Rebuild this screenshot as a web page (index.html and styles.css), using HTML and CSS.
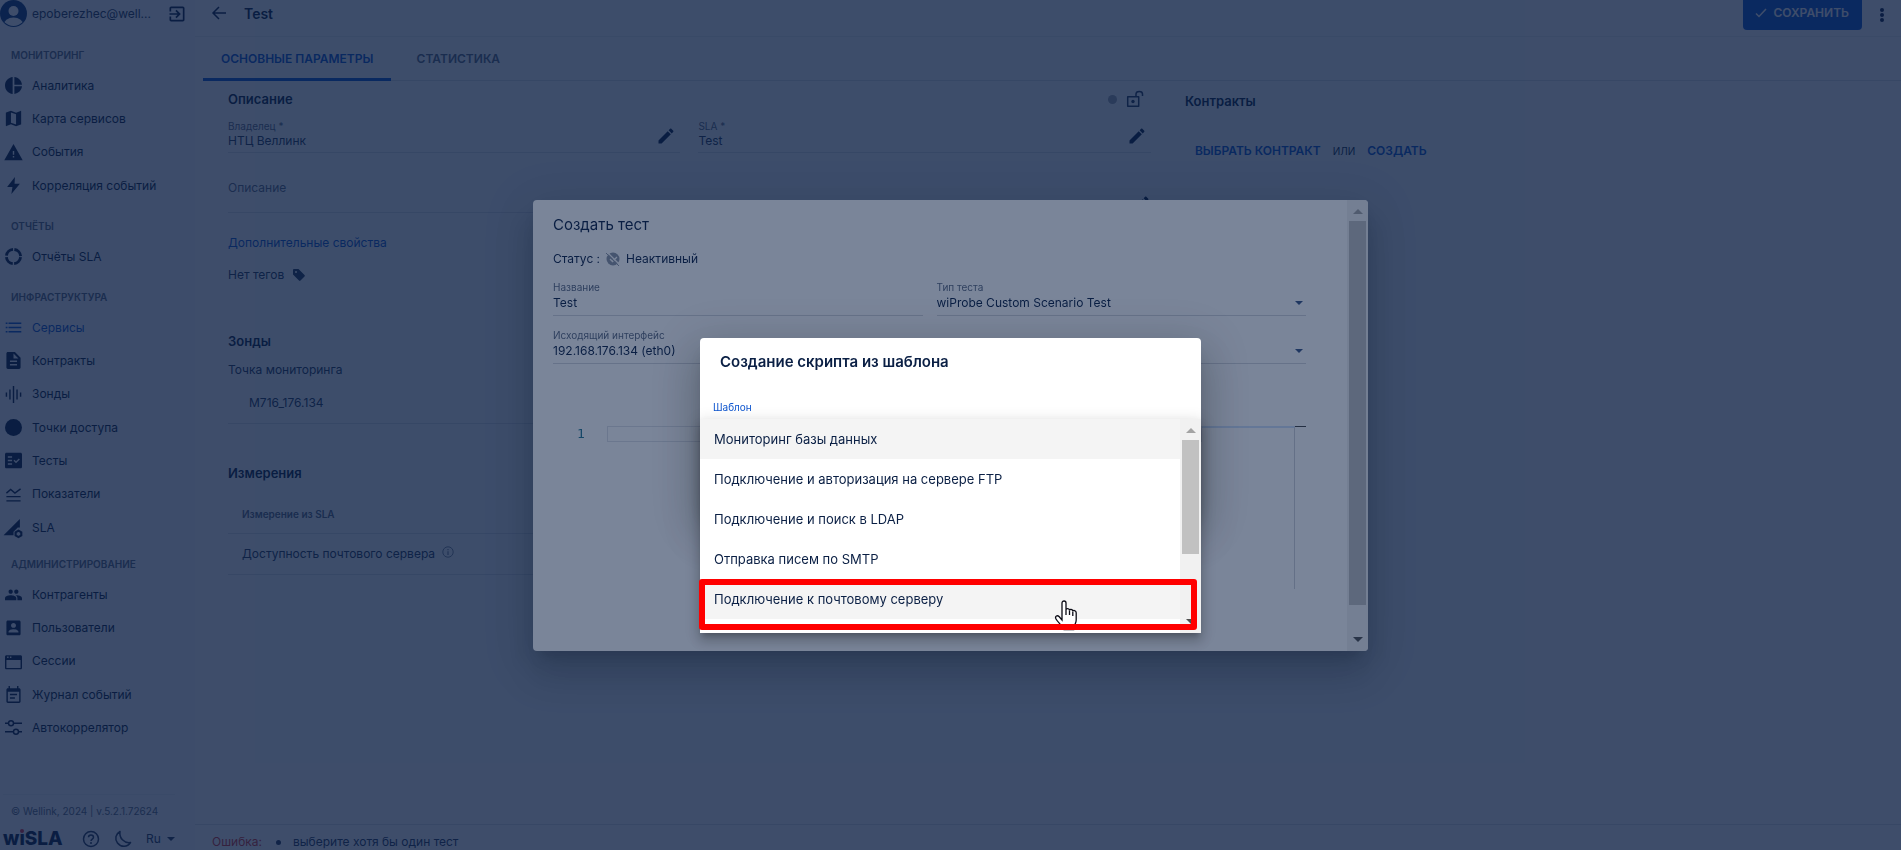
FILE: index.html
```html
<!DOCTYPE html>
<html lang="ru">
<head>
<meta charset="utf-8">
<title>wiSLA — Test</title>
<link rel="stylesheet" href="styles.css">
</head>
<body>
<svg class="defs" width="0" height="0" aria-hidden="true">
  <symbol id="i-edit" viewBox="0 0 24 24"><path d="M3 17.25V21h3.75L17.81 9.94l-3.75-3.75L3 17.25zM20.71 7.04c.39-.39.39-1.02 0-1.41l-2.34-2.34c-.39-.39-1.02-.39-1.41 0l-1.83 1.83 3.75 3.75 1.83-1.83z"/></symbol>
  <symbol id="i-caret" viewBox="0 0 8 4"><path d="M0 0h8L4 4z"/></symbol>
</svg>
<div class="app">
  <aside class="sidebar">
    <div class="user">
      <svg class="avatar" viewBox="0 0 27 27"><defs><clipPath id="av"><circle cx="13.500" cy="13.500" r="12.500"/></clipPath></defs><circle class="avatar-bg" cx="13.500" cy="13.500" r="13.500"/><g clip-path="url(#av)" fill="#fff"><circle cx="13.500" cy="11" r="5"/><ellipse cx="13.500" cy="25" rx="10" ry="7.500"/></g></svg>
      <span class="user-name">epoberezhec@well...</span>
      <button class="icon-btn" aria-label="Выйти"><svg viewBox="0 0 24 24" width="20" height="20"><path d="M10.090 15.590L11.500 17l5-5-5-5-1.410 1.410L12.670 11H3v2h9.670l-2.580 2.590zM19 3H5c-1.110 0-2 .9-2 2v4h2V5h14v14H5v-4H3v4c0 1.100.89 2 2 2h14c1.100 0 2-.9 2-2V5c0-1.100-.9-2-2-2z"/></svg></button>
    </div>
    <nav>
      <section class="group">
        <h2>МОНИТОРИНГ</h2>
        <a href="#"><svg viewBox="2 2 20 20"><path d="M11 2v20c-5.070-.5-9-4.790-9-10s3.930-9.500 9-10zm2.030 0v8.990H22c-.47-4.740-4.240-8.520-8.970-8.990zm0 11.010V22c4.740-.47 8.500-4.250 8.970-8.990h-8.970z"/></svg>Аналитика</a>
        <a href="#"><svg viewBox="2 2 20 20"><path d="M20.500 3l-.16.030L15 5.100 9 3 3.360 4.900c-.21.070-.36.250-.36.480V20.500c0 .28.220.5.5.5l.16-.03L9 18.900l6 2.100 5.640-1.900c.21-.07.36-.25.36-.48V3.500c0-.28-.22-.5-.5-.5zM15 19l-6-2.110V5l6 2.110V19z"/></svg>Карта сервисов</a>
        <a href="#"><svg viewBox="0 0 24 24"><path d="M-1 23h26L12 0zM13 19h-2v-2h2v2zm0-4h-2v-5h2v5z" fill-rule="evenodd"/></svg>События</a>
        <a href="#"><svg viewBox="0 0 24 24"><path d="M14 0L3 14h7.500L9 24l12-14.500h-7.500z"/></svg>Корреляция событий</a>
      </section>
      <section class="group">
        <h2>ОТЧЁТЫ</h2>
        <a href="#"><svg class="stroke" viewBox="0 0 24 24"><circle cx="12" cy="12" r="10" stroke-width="4" stroke-dasharray="13.700 2" stroke-dashoffset="-1"/></svg>Отчёты SLA</a>
      </section>
      <section class="group">
        <h2>ИНФРАСТРУКТУРА</h2>
        <a href="#" class="active" aria-current="page"><svg viewBox="0 0 24 24"><path d="M1 5h2.500v2H1zm4 0h18v2H5zM1 11h2.500v2H1zm4 0h18v2H5zM1 17h2.500v2H1zm4 0h18v2H5z"/></svg>Сервисы</a>
        <a href="#"><svg viewBox="0 0 24 24"><path fill-rule="evenodd" d="M14 0H4C3 0 2 1 2 2v20c0 1 1 2 2 2h16c1 0 2-1 2-2V8zm3 19H7v-2h10zm0-5H7v-2h10zm-5-5V2l7 7h-7z"/></svg>Контракты</a>
        <a href="#"><svg viewBox="0 0 24 24"><path d="M6 19h2V5H6zm5 5h2V0h-2zm-10-9h2V9H1zm15 4h2V5h-2zm5-10v6h2V9z"/></svg>Зонды</a>
        <a href="#"><svg viewBox="0 0 24 24"><circle cx="12" cy="12" r="12"/></svg>Точки доступа</a>
        <a href="#"><svg viewBox="0 0 24 24"><path fill-rule="evenodd" d="M22 1H2C1 1 0 2 0 3v18c0 1 1 2 2 2h20c1 0 2-1 2-2V3c0-1-1-2-2-2zM10 18H4v-2h6zm0-5H4v-2h6zm0-5H4V6h6zm5.500 8L12 12.500l1.500-1.500 2 2 4-4L21 10.500z"/></svg>Тесты</a>
        <a href="#"><svg class="stroke" viewBox="0 0 24 24" stroke-width="2"><path d="M2 21h20M2 15h20M2 10l6-5 6 5 8-6"/></svg>Показатели</a>
        <a href="#"><svg viewBox="0 0 24 24"><path d="M-2 23L21 0v12h-3l-6 6v5z"/><path fill="none" stroke="currentColor" stroke-width="3" d="M19 16.500l4 2.300v4.400l-4 2.300-4-2.300v-4.400z"/></svg>SLA</a>
      </section>
      <section class="group group-last">
        <h2>АДМИНИСТРИРОВАНИЕ</h2>
        <a href="#"><svg viewBox="0 0 24 24"><path d="M16 11c1.660 0 3-1.340 3-3s-1.340-3-3-3-3 1.340-3 3 1.340 3 3 3zm-8 0c1.660 0 3-1.340 3-3S9.660 5 8 5 5 6.340 5 8s1.340 3 3 3zm0 2c-3 0-8 1.170-8 4v3h16v-3c0-2.830-5-4-8-4zm8 0h-1c1.500 1 2.500 2.500 2.500 4v3H24v-3c0-2.830-5-4-8-4z"/></svg>Контрагенты</a>
        <a href="#"><svg viewBox="0 0 24 24"><path fill-rule="evenodd" d="M2 4v17c0 1 1 2 2 2h16c1 0 2-1 2-2V4c0-1-1-2-2-2H4C3 2 2 3 2 4zm13.500 5c0 2-1.500 3.500-3.500 3.500S8.500 11 8.500 9 10 5.500 12 5.500s3.500 1.500 3.500 3.500zM5 18c0-2.500 4.500-3.600 7-3.600s7 1.100 7 3.600v1H5z"/></svg>Пользователи</a>
        <a href="#"><svg viewBox="0 0 24 24"><path fill-rule="evenodd" d="M2 3h20c1 0 2 1 2 2v16c0 1-1 2-2 2H2c-1 0-2-1-2-2V5c0-1 1-2 2-2zm0 7v11h20V10zM3 5v2h2V5zm4 0v2h2V5z"/></svg>Сессии</a>
        <a href="#"><svg viewBox="0 0 24 24"><path d="M17 11H7v2h10v-2zm3-8h-1V0h-2v3H7V0H5v3H4C3 3 2 4 2 5v17c0 1 1 2 2 2h16c1 0 2-1 2-2V5c0-1-1-2-2-2zm0 19H4V8h16v14zm-6-6H7v2h7v-2z"/></svg>Журнал событий</a>
        <a href="#"><svg class="stroke" viewBox="0 0 24 24" stroke-width="2"><path d="M0 6h5M12 6h12M0 18h12M19 18h5"/><circle cx="8.500" cy="6" r="3.500"/><circle cx="15.500" cy="18" r="3.500"/></svg>Автокоррелятор</a>
      </section>
    </nav>
    <footer class="side-foot">
      <p class="copy">© Wellink, 2024 | v.5.2.1.72624</p>
      <div class="tools">
        <span class="logo">w<span class="logo-i">ı</span>SLA</span>
        <button class="icon-btn" aria-label="Помощь"><svg viewBox="0 0 18 18" width="18" height="18"><circle cx="9" cy="9" r="7.500" fill="none" stroke="currentColor" stroke-width="1.500"/><path d="M6.500 7.300c0-3.200 5-3.200 5 0 0 1.700-2.500 1.900-2.500 3.700" fill="none" stroke="currentColor" stroke-width="1.500"/><circle cx="9" cy="13" r="1"/></svg></button>
        <button class="icon-btn" aria-label="Тёмная тема"><svg viewBox="0 0 18 18" width="18" height="18"><path d="M6 1.500C1.500 4 .5 9 3.500 13c3.500 4.500 10 4.500 13-.5C10 13.500 5 8 6 1.500z" fill="none" stroke="currentColor" stroke-width="1.500" stroke-linejoin="round"/></svg></button>
        <button class="lang">Ru <svg width="8" height="4"><use href="#i-caret"/></svg></button>
      </div>
    </footer>
  </aside>
  <main class="main">
    <header class="top">
      <button class="icon-btn" aria-label="Назад"><svg viewBox="0 0 16 16" width="16" height="16"><path d="M15 8H2M8 2L2 8l6 6" fill="none" stroke="currentColor" stroke-width="1.500"/></svg></button>
      <h1>Test</h1>
      <button class="save"><svg viewBox="0 0 12 10" width="12" height="10"><path d="M1 5.500L4 8.500 11 1" fill="none" stroke="currentColor" stroke-width="1.500"/></svg>СОХРАНИТЬ</button>
      <button class="icon-btn" aria-label="Меню"><svg viewBox="0 0 4 14" width="4" height="14"><circle cx="2" cy="2" r="2"/><circle cx="2" cy="7" r="2"/><circle cx="2" cy="12" r="2"/></svg></button>
    </header>
    <div class="tabs" role="tablist">
      <button class="tab selected" role="tab" aria-selected="true">ОСНОВНЫЕ ПАРАМЕТРЫ</button>
      <button class="tab" role="tab" aria-selected="false">СТАТИСТИКА</button>
    </div>
    <div class="content">
      <div class="left">
        <div class="head-row">
          <h3>Описание</h3>
          <span class="dot"></span>
          <svg class="lock" viewBox="0 0 18 18" width="18" height="18"><path d="M1.700 6.700h11v9.600h-11zM10 6.500V4c0-3.500 6.500-3.500 6.500 0v2" fill="none" stroke="currentColor" stroke-width="1.500" stroke-linejoin="round"/><circle cx="7" cy="11.500" r="1.700"/></svg>
        </div>
        <div class="pair">
          <div class="field"><div class="field-text"><label for="owner">Владелец *</label><input id="owner" value="НТЦ Веллинк"></div><button class="icon-btn pencil" aria-label="Изменить владельца"><svg width="20" height="20"><use href="#i-edit"/></svg></button></div>
          <div class="field"><div class="field-text"><label for="sla">SLA *</label><input id="sla" value="Test"></div><button class="icon-btn pencil" aria-label="Изменить SLA"><svg width="20" height="20"><use href="#i-edit"/></svg></button></div>
        </div>
        <div class="field descr"><input aria-label="Описание" placeholder="Описание"><button class="icon-btn pencil" aria-label="Изменить описание"><svg width="20" height="20"><use href="#i-edit"/></svg></button></div>
        <a class="more" href="#">Дополнительные свойства</a>
        <div class="tags">Нет тегов <svg viewBox="0 0 12 12" width="12" height="12"><path fill-rule="evenodd" d="M1 0h4.500L11.500 6c.5.500.5 1 0 1.500L7.500 11.500c-.5.500-1 .5-1.500 0L0 5.500V1c0-.5.500-1 1-1zm2 2a1 1 0 100 2 1 1 0 000-2z"/></svg></div>
        <h3 class="probes">Зонды</h3>
        <p class="sub">Точка мониторинга</p>
        <p class="probe">M716_176.134</p>
        <h3 class="measures">Измерения</h3>
        <table>
          <thead><tr><th>Измерение из SLA</th></tr></thead>
          <tbody><tr><td>Доступность почтового сервера <svg viewBox="0 0 12 12" width="12" height="12"><circle cx="6" cy="6" r="5.200" fill="none" stroke="currentColor" stroke-width=".8"/><path d="M5.500 5.200h1V9h-1zM5.500 3h1v1.200h-1z"/></svg></td></tr></tbody>
        </table>
      </div>
      <div class="right">
        <h3>Контракты</h3>
        <div class="choose"><button class="link-btn">ВЫБРАТЬ КОНТРАКТ</button><span>ИЛИ</span><button class="link-btn">СОЗДАТЬ</button></div>
      </div>
    </div>
    <footer class="errors"><span class="err">Ошибка:</span><ul><li>выберите хотя бы один тест</li></ul></footer>
  </main>
</div>

<div class="backdrop">
  <div class="modal" role="dialog" aria-labelledby="m-title">
    <div class="modal-body">
      <h2 id="m-title">Создать тест</h2>
      <p class="status">Статус : <svg viewBox="0 0 14 14" width="14" height="14"><circle cx="7" cy="7" r="6.500"/><path d="M4 7l2.500 2.500L11 5M1 0l13 13" fill="none" stroke="#fff" stroke-width="1.300"/><path d="M0 1l13 13" fill="none" stroke="currentColor"/></svg> <span>Неактивный</span></p>
      <div class="form">
        <div class="mfield"><label for="name">Название</label><input id="name" value="Test"></div>
        <div class="mfield"><label for="type">Тип теста</label><select id="type"><option>wiProbe Custom Scenario Test</option></select><svg class="arrow" width="8" height="4"><use href="#i-caret"/></svg></div>
        <div class="mfield wide"><label for="iface">Исходящий интерфейс</label><select id="iface"><option>192.168.176.134 (eth0)</option></select><svg class="arrow" width="8" height="4"><use href="#i-caret"/></svg></div>
      </div>
      <div class="editor">
        <div class="gutter">1</div>
        <div class="code"><div class="line"></div></div>
        <div class="minimap"></div>
        <div class="ruler"></div>
      </div>
    </div>
    <div class="scroll"><i class="up"></i><i class="thumb"></i><i class="down"></i></div>
  </div>
</div>

<div class="backdrop">
  <div class="dialog" role="dialog" aria-labelledby="d-title">
    <h2 id="d-title">Создание скрипта из шаблона</h2>
    <label id="tpl">Шаблон</label>
    <div class="menu">
      <ul role="listbox" aria-labelledby="tpl">
        <li role="option" class="hl">Мониторинг базы данных</li>
        <li role="option">Подключение и авторизация на сервере FTP</li>
        <li role="option">Подключение и поиск в LDAP</li>
        <li role="option">Отправка писем по SMTP</li>
        <li role="option" class="hl">Подключение к почтовому серверу</li>
      </ul>
      <div class="scroll"><i class="up"></i><i class="thumb"></i><i class="down"></i></div>
      <svg class="cursor" viewBox="0 0 24 31" width="24" height="31"><path d="M8 20V3c0-2.700 4-2.700 4 0v7c0-1.800 3.500-1.800 3.500.5 0-1.800 3.300-1.300 3.300.8 0-1.500 3.400-1 3.400 1.500V20c0 3-2 5-2.500 9.500H10c-1-3-6-7-8-10.500-1.500-3 1.500-4 3-2.500z" fill="#fff" stroke="#0a0a14" stroke-width="1.300"/><path d="M12 10v5M15.500 10.500V15M18.800 11.500V16" stroke="#0a0a14" stroke-width="1.300"/></svg>
      <div class="mark"></div>
    </div>
  </div>
</div>
</body>
</html>
```
FILE: styles.css
```css
* { box-sizing: border-box; margin: 0; padding: 0; }
:root { --ink: #0a1f44; --muted: #5c6980; --blue: #0d55cf; --line: #dfe2e8; }
body {
  height: 100vh;
  overflow: hidden;
  font: 12px/16px Inter, "Noto Sans", sans-serif;
  color: var(--ink);
  background: #fff;
}
.defs { position: absolute; }
svg { fill: currentColor; flex: none; }
svg.stroke { fill: none; stroke: currentColor; }
button, input, select { font: inherit; color: inherit; background: none; border: 0; outline: 0; }
a { color: inherit; text-decoration: none; }
ul { list-style: none; }
.icon-btn { display: flex; }

.app { display: flex; height: 100vh; }

/* Sidebar */
.sidebar {
  width: 195px;
  flex: none;
  display: flex;
  flex-direction: column;
  background: #f8f9fc;
}
.user { display: flex; align-items: center; height: 27px; padding-right: 8px; }
.avatar { width: 27px; height: 27px; }
.avatar-bg { fill: #0f3a7a; }
.user-name { flex: 1; padding-left: 5px; color: #26385a; }
nav { padding-top: 14px; }
.group + .group { margin-top: 10px; }
.group + .group-last { margin-top: 6px; }
.group h2 {
  padding-left: 11px;
  font-size: 10px;
  font-weight: 600;
  line-height: 28px;
  color: var(--muted);
}
.group a { display: flex; align-items: center; gap: 10px; height: 33px; padding-left: 5px; }
.group a:nth-of-type(3n) { height: 34px; }
.group a svg { width: 17px; height: 17px; overflow: visible; }
.group a.active { color: var(--blue); }
.side-foot { margin-top: auto; }
.copy {
  margin: 0 20px 0 3px;
  padding: 8px 8px 10px;
  border-top: 1px solid #eceef3;
  font-size: 10px;
  color: var(--muted);
}
.tools { display: flex; align-items: center; height: 21px; padding: 0 0 2px 3px; color: #26385a; }
.logo { width: 79px; font-size: 19px; font-weight: 800; line-height: 18px; color: var(--ink); }
.logo-i { position: relative; }
.logo-i::before {
  content: "";
  position: absolute;
  top: 2px;
  left: 1px;
  width: 4px;
  height: 4px;
  border-radius: 50%;
  background: #e0303c;
}
.tools .icon-btn { margin-right: 14px; }
.lang { display: flex; align-items: center; gap: 6px; }

/* Main area */
.main { flex: 1; min-width: 0; display: flex; flex-direction: column; }
.top {
  display: flex;
  align-items: flex-start;
  height: 37px;
  padding: 0 17px 0 16px;
  border-bottom: 1px solid #eceef2;
}
.top .icon-btn { padding-top: 5px; }
.top .save + .icon-btn { padding: 8px 0 0; }
.top h1 { flex: 1; padding-left: 17px; font-size: 14px; font-weight: 600; line-height: 27px; }
.save {
  display: flex;
  align-items: center;
  gap: 6px;
  height: 30px;
  margin-right: 18px;
  padding: 0 13px 4px 12px;
  border-radius: 0 0 4px 4px;
  background: var(--blue);
  color: #fff;
  font-weight: 600;
}
.tabs { display: flex; height: 44px; margin-left: 8px; border-bottom: 1px solid var(--line); }
.tab { min-width: 134px; padding: 0 18px; font-weight: 600; color: var(--muted); }
.tab.selected { margin-bottom: -1px; border-top: 3px solid transparent; border-bottom: 3px solid var(--blue); color: var(--blue); }
.content {
  flex: 1;
  display: grid;
  grid-template-columns: 56% 1fr;
  gap: 34px;
  padding: 8px 25px 0 33px;
}
h3 { font-size: 13px; font-weight: 600; line-height: 20px; }
.head-row { display: flex; align-items: center; gap: 9px; padding-right: 7px; }
.head-row h3 { flex: 1; }
.dot { width: 9px; height: 9px; border-radius: 50%; background: #a3a8b3; }
.lock { color: #26385a; }
.pair { display: grid; grid-template-columns: 1fr 1fr; gap: 18px; margin-top: 10px; }
.field { display: flex; align-items: center; padding-bottom: 3px; border-bottom: 1px solid var(--line); }
.field-text { flex: 1; }
.field input { display: block; width: 100%; height: 16px; color: #26385a; }
.field input::placeholder { color: var(--muted); opacity: 1; }
label { display: block; font-size: 10px; line-height: 14px; color: var(--muted); }
.pencil { margin-right: 4px; padding-top: 4px; }
.field.descr { margin-top: 27px; padding-bottom: 16px; }
.descr .pencil { height: 16px; padding-top: 14px; margin-right: 0; overflow: visible; }
.more { display: block; margin-top: 22px; color: var(--blue); }
.tags { display: flex; align-items: center; gap: 9px; margin-top: 16px; color: #26385a; }
.probes { margin-top: 48px; }
.sub { margin-top: 11px; color: #26385a; }
.probe { margin-top: 17px; padding: 0 0 12px 21px; border-bottom: 1px solid var(--line); color: #26385a; }
.measures { margin-top: 39px; }
table { width: 100%; margin-top: 12px; border-collapse: collapse; }
th, td { padding: 0 14px; border-bottom: 1px solid var(--line); text-align: left; }
th { height: 38px; font-size: 10px; font-weight: 600; color: var(--muted); }
td { height: 41px; color: #26385a; }
td svg { margin-left: 4px; color: var(--muted); }
.right { padding-top: 2px; }
.choose { display: flex; align-items: center; gap: 12px; padding: 32px 0 0 10px; font-size: 10px; }
.link-btn { font-size: 12px; font-weight: 600; color: var(--blue); }
.errors { display: flex; align-items: center; height: 26px; padding: 9px 17px 0; border-top: 1px solid var(--line); color: #26385a; }
.err { width: 64px; color: #d3302f; }
.errors li { display: flex; align-items: center; gap: 12px; }
.errors li::before { content: ""; width: 5px; height: 5px; border-radius: 50%; background: currentColor; }

/* Dialog layers */
.backdrop {
  position: fixed;
  inset: 0;
  display: grid;
  place-items: center;
  background: rgba(10, 29, 66, 0.54);
}
.modal, .dialog {
  background: #fff;
  border-radius: 4px;
  box-shadow: 0 11px 15px -7px rgba(0, 0, 0, 0.2), 0 24px 38px 3px rgba(0, 0, 0, 0.14), 0 9px 46px 8px rgba(0, 0, 0, 0.12);
}
.modal { display: flex; width: 90%; max-width: 835px; overflow: hidden; }
.modal-body { flex: 1; padding: 13px 41px 62px 20px; }
.modal h2 { font-size: 15px; font-weight: 400; line-height: 24px; }
.status { display: flex; align-items: center; gap: 6px; margin-top: 12px; line-height: 20px; }
.status svg { color: #8c94a3; }
.form { display: grid; grid-template-columns: 1fr 1fr; gap: 12px 14px; margin-top: 11px; }
.mfield { position: relative; padding-bottom: 4px; border-bottom: 1px solid #d3d6dd; }
.mfield label { line-height: 15px; }
.mfield.wide { grid-column: 1 / -1; }
.mfield input, .mfield select { display: block; width: 100%; height: 16px; appearance: none; }
.arrow { position: absolute; right: 3px; bottom: 10px; color: #3a5585; }
.editor { display: flex; height: 163px; margin-top: 62px; }
.gutter { width: 54px; padding-left: 24px; font: 13px/15px "DejaVu Sans Mono", monospace; color: #237893; }
.code { flex: 1; }
.line { height: 16px; border: 1px solid #dfe1e6; }
.minimap { width: 93px; border-top: 2px solid #d0e0fa; border-right: 1px solid #cfd2d8; }
.ruler { width: 11px; border-top: 1px solid #444; }

/* Scroll tracks */
.scroll { display: flex; flex-direction: column; align-items: center; width: 21px; background: #f1f1f1; }
.scroll i { flex: none; }
.scroll .up { border: 5px solid transparent; border-top: 0; border-bottom-color: #a3a3a3; margin: 9px 0 7px; }
.scroll .thumb { width: 17px; flex: 0 1 auto; background: #c1c1c1; }
.scroll .down { border: 5px solid transparent; border-bottom: 0; border-top-color: #505050; margin: auto 0 9px; }
.modal .thumb { height: 384px; }
.menu .thumb { height: 114px; }

/* Template picker */
.dialog { position: relative; width: 90%; max-width: 501px; padding: 12px 20px 99px; }
.dialog h2 { font-size: 15px; font-weight: 600; line-height: 24px; }
.dialog label { margin: 26px -7px 0; color: var(--blue); }
.menu {
  position: absolute;
  top: 81px;
  left: 0;
  right: 0;
  display: flex;
  background: #fff;
  box-shadow: 0 5px 5px -3px rgba(0, 0, 0, 0.2), 0 8px 10px 1px rgba(0, 0, 0, 0.14), 0 3px 14px 2px rgba(0, 0, 0, 0.12);
}
.menu ul { flex: 1; padding-bottom: 14px; }
.menu li { padding: 0 14px; font-size: 13px; line-height: 40px; }
.menu .hl { background: #f4f4f4; }
.cursor { position: absolute; right: 123px; bottom: 2px; }
.mark { position: absolute; left: -1px; right: 4px; bottom: 3px; height: 51px; border: 6px solid #f00; border-radius: 3px; }
```
